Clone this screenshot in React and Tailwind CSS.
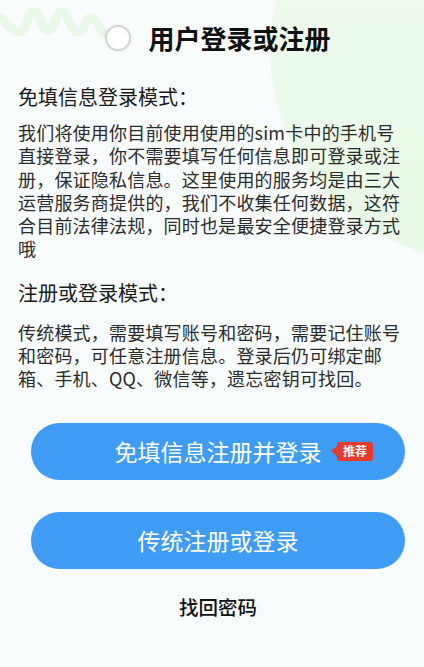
import React from "react";

const font = { fontFamily: '"Noto Sans CJK SC", "Noto Sans", sans-serif' };

const para1 = [
  "我们将使用你目前使用使用的sim卡中的手机号",
  "直接登录，你不需要填写任何信息即可登录或注",
  "册，保证隐私信息。这里使用的服务均是由三大",
  "运营服务商提供的，我们不收集任何数据，这符",
  "合目前法律法规，同时也是最安全便捷登录方式",
  "哦",
];

const para2 = [
  "传统模式，需要填写账号和密码，需要记住账号",
  "和密码，可任意注册信息。登录后仍可绑定邮",
  "箱、手机、QQ、微信等，遗忘密钥可找回。",
];

export default function App() {
  return (
    <div
      className="relative w-full min-h-[667px] overflow-hidden bg-[#f8fcfd] text-[#222]"
      style={font}
    >
      {/* background decorations */}
      <div className="pointer-events-none absolute left-[270px] top-[-160px] h-[420px] w-[460px] rounded-full bg-gradient-to-b from-[#f1fcf1] to-[#e8f9e6]" />
      <svg
        className="pointer-events-none absolute left-0 top-0"
        width="120"
        height="50"
        viewBox="0 0 120 50"
      >
        <path
          d="M-4 16 C 6 18, 12 34, 20 32 C 28 30, 26 12, 34 12 C 42 12, 40 30, 48 30 C 56 30, 54 12, 62 12 C 70 12, 68 32, 78 32 C 86 32, 84 16, 92 18 C 98 20, 100 32, 106 34"
          fill="none"
          stroke="#eaf9e7"
          strokeWidth="9"
          strokeLinecap="round"
        />
      </svg>

      <div className="relative flex flex-col">
        {/* header */}
        <div className="flex items-center justify-center gap-[17px] pl-[12px] pt-[20px]">
          <div className="h-[26px] w-[26px] rounded-full border-[2px] border-[#d4d4d4] bg-white shadow-[0_0_2px_rgba(0,0,0,0.15)]" />
          <div className="text-[26px] font-bold leading-[36px] text-[#111]">
            用户登录或注册
          </div>
        </div>

        <div className="mt-[27px] pl-[18px] pr-[8px]">
          <div className="text-[20px] leading-[28px] text-[#1a1a1a]">
            免填信息登录模式：
          </div>
          <div className="mt-[10px] text-[18px] leading-[23.3px] tracking-[0.2px] text-[#2b2b2b]">
            {para1.map((l) => (
              <div key={l} className="whitespace-nowrap">
                {l}
              </div>
            ))}
          </div>

          <div className="mt-[18px] text-[20px] leading-[28px] text-[#1a1a1a]">
            注册或登录模式：
          </div>
          <div className="mt-[14px] text-[18px] leading-[23.3px] tracking-[0.2px] text-[#2b2b2b]">
            {para2.map((l) => (
              <div key={l} className="whitespace-nowrap">
                {l}
              </div>
            ))}
          </div>
        </div>

        <div className="mt-[32px] flex flex-col gap-[32px] pl-[31px]">
          <button className="relative flex h-[57px] w-[374px] items-center justify-center rounded-full bg-[#3f9cf4] text-[23px] text-white">
            <span>免填信息注册并登录</span>
            <span className="absolute left-[300px] top-[19px] flex items-center">
              <span className="h-0 w-0 border-y-[5px] border-r-[6px] border-y-transparent border-r-[#e53a2f]" />
              <span className="flex h-[19px] items-center rounded-[3px] bg-[#e53a2f] px-[6px] text-[12px] font-bold leading-none text-white">
                推荐
              </span>
            </span>
          </button>
          <button className="flex h-[57px] w-[374px] items-center justify-center rounded-full bg-[#3f9cf4] text-[23px] text-white">
            传统注册或登录
          </button>
        </div>

        <div className="mt-[24px] pl-[12px] text-center text-[19.5px] font-medium leading-[28px] text-[#111]">
          找回密码
        </div>
      </div>
    </div>
  );
}
